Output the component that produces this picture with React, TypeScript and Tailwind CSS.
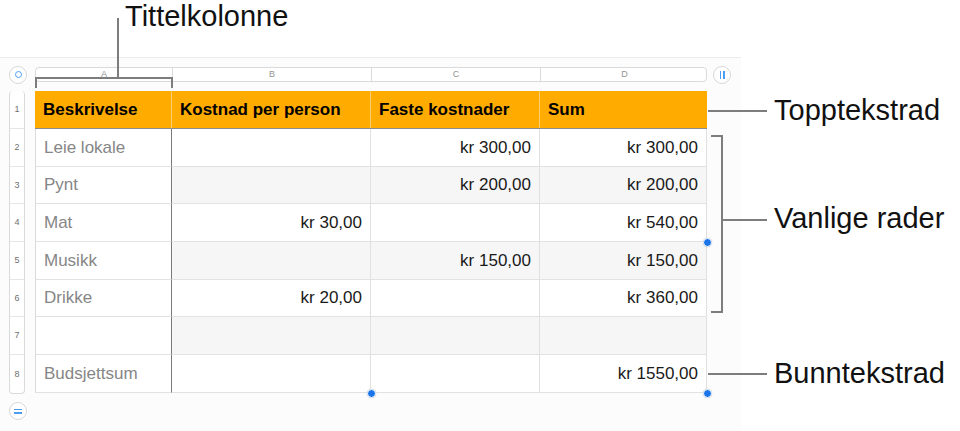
const columns = ["A", "B", "C", "D"];
const colWidths = ["w-[137px]", "w-[199px]", "w-[169px]", "w-[167px]"];
const rowHeights = ["h-[38px]", "h-[38px]", "h-[37px]", "h-[38px]", "h-[38px]", "h-[37px]", "h-[38px]", "h-[38px]"];

const header = ["Beskrivelse", "Kostnad per person", "Faste kostnader", "Sum"];
const body = [
  ["Leie lokale", "", "kr 300,00", "kr 300,00"],
  ["Pynt", "", "kr 200,00", "kr 200,00"],
  ["Mat", "kr 30,00", "", "kr 540,00"],
  ["Musikk", "", "kr 150,00", "kr 150,00"],
  ["Drikke", "kr 20,00", "", "kr 360,00"],
  ["", "", "", ""],
  ["Budsjettsum", "", "", "kr 1550,00"],
];

function Handle({ className }: { className: string }) {
  return (
    <span
      className={`absolute w-[9px] h-[9px] rounded-full bg-[#1b74e8] border-[1.5px] border-white shadow-[0_0_1px_rgba(0,0,0,0.25)] ${className}`}
    />
  );
}

function RoundButton({ children }: { children: React.ReactNode }) {
  return (
    <div className="w-[18px] h-[18px] shrink-0 rounded-full border border-[#d9d9d9] bg-white flex items-center justify-center">
      {children}
    </div>
  );
}

export default function App() {
  return (
    <div className="relative w-[960px] h-[431px] overflow-hidden bg-white flex flex-col font-['Liberation_Sans',Arial,sans-serif] text-[#111]">
      {/* title callout */}
      <div className="h-[57px] shrink-0 pl-[125px] text-[29px] leading-[32px]">Tittelkolonne</div>

      <div className="flex flex-1">
        {/* spreadsheet canvas */}
        <div className="w-[741px] shrink-0 border-t border-[#ececec] bg-[#fcfcfc] pl-[9px]">
          {/* column letters */}
          <div className="mt-[7px] h-[19px] flex items-center">
            <RoundButton>
              <span className="w-[7px] h-[7px] rounded-full border-[1.5px] border-[#4a9ef5]" />
            </RoundButton>
            <div className="ml-[8px] w-[672px] h-[15px] flex rounded-[4px] border border-[#dadada] bg-white">
              {columns.map((c, i) => (
                <div
                  key={c}
                  className={`${colWidths[i]} shrink-0 flex items-center justify-center text-[9px] leading-none text-[#949494] ${i < 3 ? "border-r border-[#dadada]" : ""}`}
                >
                  {c}
                </div>
              ))}
            </div>
            <div className="ml-[6px]">
              <RoundButton>
                <span className="flex gap-[2px]">
                  <span className="w-[1.5px] h-[8px] bg-[#4a9ef5]" />
                  <span className="w-[1.5px] h-[8px] bg-[#4a9ef5]" />
                </span>
              </RoundButton>
            </div>
          </div>

          <div className="mt-[7px] flex">
            {/* row numbers */}
            <div className="w-[16px] shrink-0 flex flex-col rounded-[4px] border-x border-b border-[#dadada] bg-white overflow-hidden">
              {rowHeights.map((h, i) => (
                <div
                  key={i}
                  className={`${h} flex items-center justify-center text-[9px] leading-none text-[#6f6f6f] ${i < 7 ? "border-b border-[#e6e6e6]" : ""}`}
                >
                  {i + 1}
                </div>
              ))}
            </div>

            {/* table */}
            <div className="relative ml-[10px] w-[672px] flex flex-col">
              <div className={`${rowHeights[0]} flex bg-[#ffab00] border-b border-[#8c8c8c]`}>
                {header.map((t, i) => (
                  <div
                    key={t}
                    className={`${colWidths[i]} shrink-0 flex items-center px-2 text-[17px] font-bold text-black ${i < 3 ? "border-r border-[#f8cf70]" : ""}`}
                  >
                    {t}
                  </div>
                ))}
              </div>
              {body.map((row, r) => (
                <div key={r} className={`${rowHeights[r + 1]} flex`}>
                  {row.map((t, c) => {
                    const shaded = c > 0 && (r === 1 || r === 3 || r === 5);
                    return (
                      <div
                        key={c}
                        className={`${colWidths[c]} shrink-0 flex items-center px-2 text-[17px] border-b border-[#e2e2e2] ${
                          c === 0
                            ? "border-l border-l-[#dadada] border-r border-r-[#7a7a7a] text-[#868686] bg-white"
                            : "justify-end border-r border-r-[#e0e0e0] text-[#1a1a1a]"
                        } ${shaded ? "bg-[#f6f6f6]" : "bg-white"}`}
                      >
                        {t}
                      </div>
                    );
                  })}
                </div>
              ))}
              <Handle className="left-[668px] top-[147px]" />
              <Handle className="left-[332px] top-[298px]" />
              <Handle className="left-[668px] top-[298px]" />
            </div>
          </div>

          <div className="mt-[8px]">
            <RoundButton>
              <span className="flex flex-col gap-[2px]">
                <span className="w-[8px] h-[1.5px] bg-[#4a9ef5]" />
                <span className="w-[8px] h-[1.5px] bg-[#4a9ef5]" />
              </span>
            </RoundButton>
          </div>
        </div>

        {/* right-hand callouts */}
        <div className="flex flex-col pl-[33px] text-[29px] leading-[29px]">
          <div className="mt-[39px]">Topptekstrad</div>
          <div className="mt-[79px]">Vanlige rader</div>
          <div className="mt-[126px]">Bunntekstrad</div>
        </div>
      </div>

      {/* leader lines */}
      <svg className="absolute inset-0 pointer-events-none" width="960" height="431" viewBox="0 0 960 431">
        <g stroke="#7d7d7d" strokeWidth="2" fill="none">
          <path d="M118 18 V78" />
          <path d="M36 88 V78 H172 V88" />
          <path d="M708 111 H767" />
          <path d="M711 136 H722 V312 H711" />
          <path d="M722 220 H767" />
          <path d="M708 374 H767" />
        </g>
      </svg>
    </div>
  );
}
